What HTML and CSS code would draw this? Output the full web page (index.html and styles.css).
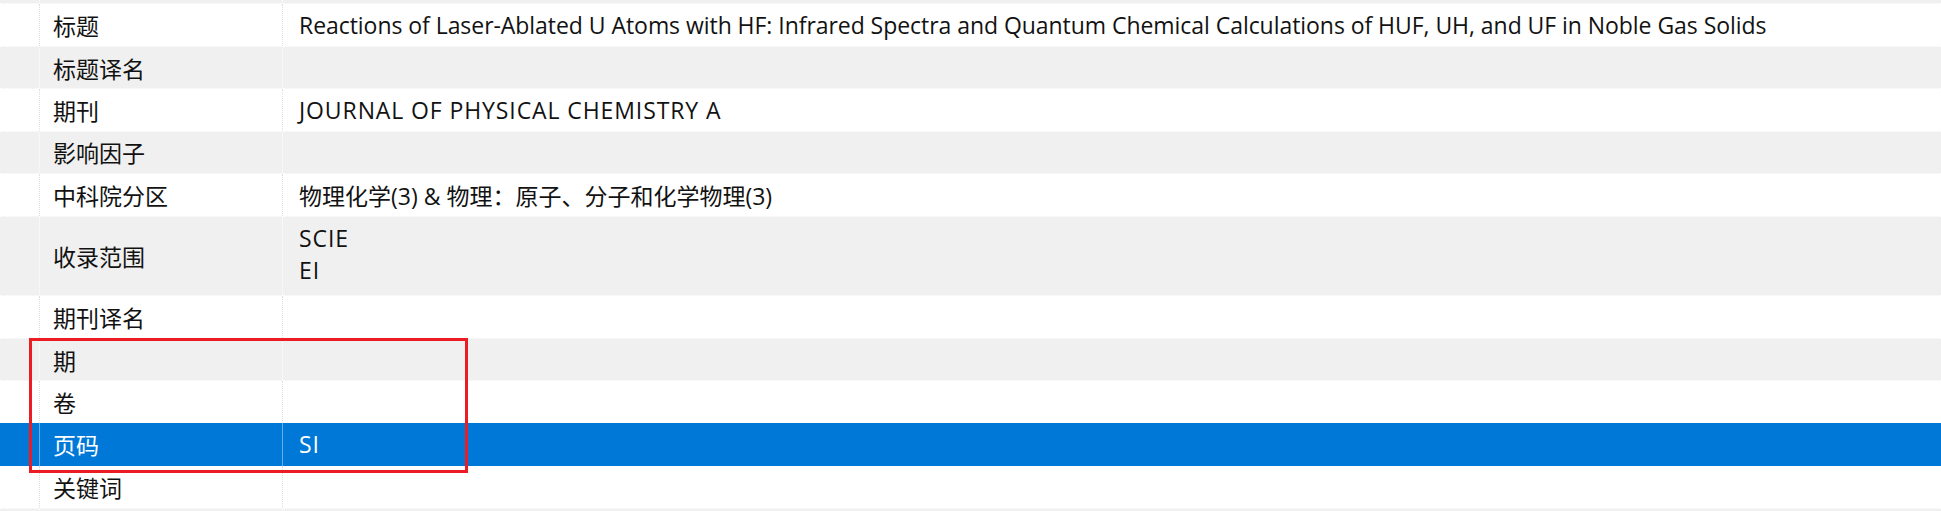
FILE: index.html
```html
<!DOCTYPE html>
<html lang="zh-CN">
<head>
<meta charset="utf-8">
<title>属性</title>
<link rel="stylesheet" href="styles.css">
</head>
<body>
<div class="grid">
  <div class="row alt edge-top"><div class="c h"></div><div class="c k"></div><div class="c v"></div></div>
  <div class="row"><div class="c h"></div><div class="c k">标题</div><div class="c v tight">Reactions of Laser-Ablated U Atoms with HF: Infrared Spectra and Quantum Chemical Calculations of HUF, UH, and UF in Noble Gas Solids</div></div>
  <div class="row alt"><div class="c h"></div><div class="c k">标题译名</div><div class="c v"></div></div>
  <div class="row"><div class="c h"></div><div class="c k">期刊</div><div class="c v caps">JOURNAL OF PHYSICAL CHEMISTRY A</div></div>
  <div class="row alt"><div class="c h"></div><div class="c k">影响因子</div><div class="c v"></div></div>
  <div class="row"><div class="c h"></div><div class="c k">中科院分区</div><div class="c v">物理化学(3) &amp; 物理：原子、分子和化学物理(3)</div></div>
  <div class="row alt tall"><div class="c h"></div><div class="c k">收录范围</div><div class="c v multi caps"><span>SCIE</span><span>EI</span></div></div>
  <div class="row"><div class="c h"></div><div class="c k">期刊译名</div><div class="c v"></div></div>
  <div class="row alt"><div class="c h"></div><div class="c k">期</div><div class="c v"></div></div>
  <div class="row"><div class="c h"></div><div class="c k">卷</div><div class="c v"></div></div>
  <div class="row sel"><div class="c h"></div><div class="c k">页码</div><div class="c v caps">SI</div></div>
  <div class="row"><div class="c h"></div><div class="c k">关键词</div><div class="c v"></div></div>
  <div class="row alt edge-bottom"><div class="c h"></div><div class="c k"></div><div class="c v"></div></div>
  <div class="highlight"></div>
</div>
</body>
</html>
```
FILE: styles.css
```css
html, body {
  margin: 0;
  padding: 0;
  background: #ffffff;
}
body {
  width: 1941px;
  height: 511px;
  overflow: hidden;
  font-family: "Open Sans", "Noto Sans CJK SC", sans-serif;
  font-size: 23px;
  color: #121212;
}
.grid {
  position: relative;
  display: flex;
  flex-direction: column;
}
.row {
  display: grid;
  grid-template-columns: 40px 243px 1fr;
  height: 42.4px;
  background: #ffffff;
}
.row.alt {
  background: #f0f0f0;
}
.row.alt .c {
  border-top: 1px dotted #ffffff;
  border-bottom: 1px dotted #ffffff;
}
.row.tall {
  height: 80px;
}
.row.edge-top {
  height: 4px;
}
.row.edge-top .c { border-top: none; }
.row.edge-bottom {
  height: 10px;
}
.row.edge-bottom .c { border-bottom: none; }
.c {
  box-sizing: border-box;
  display: flex;
  align-items: center;
  border-right: 1px dotted #dedede;
  white-space: nowrap;
  overflow: hidden;
}
.row.alt .c { border-right-color: #ffffff; }
.c.v {
  border-right: none;
  padding-left: 16px;
}
.c.k {
  padding-left: 13px;
}
.c.tight {
  letter-spacing: -0.05px;
}
.c.caps {
  letter-spacing: 0.9px;
}
.c.multi {
  flex-direction: column;
  align-items: flex-start;
  justify-content: center;
  line-height: 32px;
  padding-bottom: 3px;
}
.row.sel {
  background: #0078d7;
  color: #ffffff;
}
.row.sel .c {
  border-right: 1px solid #6aaee8;
}
.row.sel .c.v { border-right: none; }
.highlight {
  position: absolute;
  left: 29px;
  top: 338px;
  width: 439px;
  height: 135px;
  box-sizing: border-box;
  border: 3px solid #ec1c24;
  pointer-events: none;
}
```
